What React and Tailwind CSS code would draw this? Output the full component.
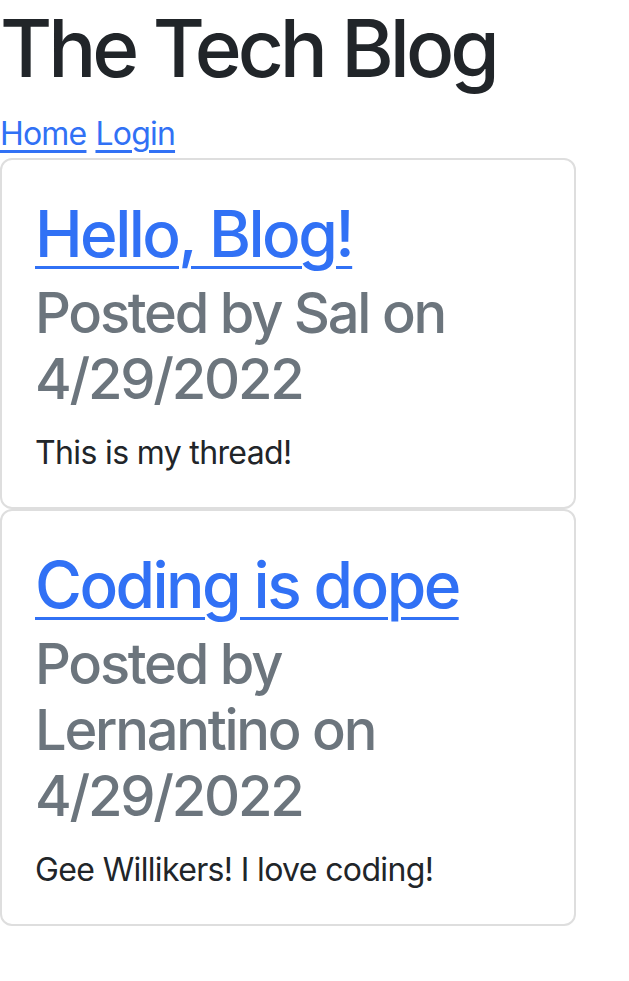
import React from "react";

const posts = [
  {
    id: 1,
    title: "Hello, Blog!",
    author: "Sal",
    date: "4/29/2022",
    body: "This is my thread!",
  },
  {
    id: 2,
    title: "Coding is dope",
    author: "Lernantino",
    date: "4/29/2022",
    body: "Gee Willikers! I love coding!",
  },
];

const PostCard = ({ title, author, date, body }) => {
  return (
    <div className="w-[576px] border-2 border-[#dedede] rounded-[12px] bg-white">
      <div className="px-[33px] pt-[35px] pb-[30px]">
        <h2 className="text-[64px] leading-[77px] font-medium tracking-[-0.04em] mb-[8px]">
          <a href="#" className="text-[#3171f5] underline underline-offset-[9px] decoration-[3px]">
            {title}
          </a>
        </h2>
        <h3 className="text-[56px] leading-[66px] font-medium tracking-[-0.04em] text-[#6c757d] mb-[17px]">
          Posted by {author}&nbsp;on {date}
        </h3>
        <p className="text-[32px] leading-[48px] tracking-[-0.02em] text-[#212529]">{body}</p>
      </div>
    </div>
  );
};

const App = () => {
  return (
    <div className="min-h-screen bg-white font-['Inter',sans-serif] text-[#212529]">
      <h1 className="text-[80px] leading-[96px] font-medium tracking-[-0.05em] mb-[14px]">
        The Tech Blog
      </h1>
      <nav className="text-[32px] leading-[48px] tracking-[-0.025em] flex gap-[9px]">
        <a href="#" className="text-[#3171f5] underline underline-offset-[5px]">
          Home
        </a>
        <a href="#" className="text-[#3171f5] underline underline-offset-[5px]">
          Login
        </a>
      </nav>
      {posts.map((post) => (
        <PostCard key={post.id} {...post} />
      ))}
    </div>
  );
};

export default App;
